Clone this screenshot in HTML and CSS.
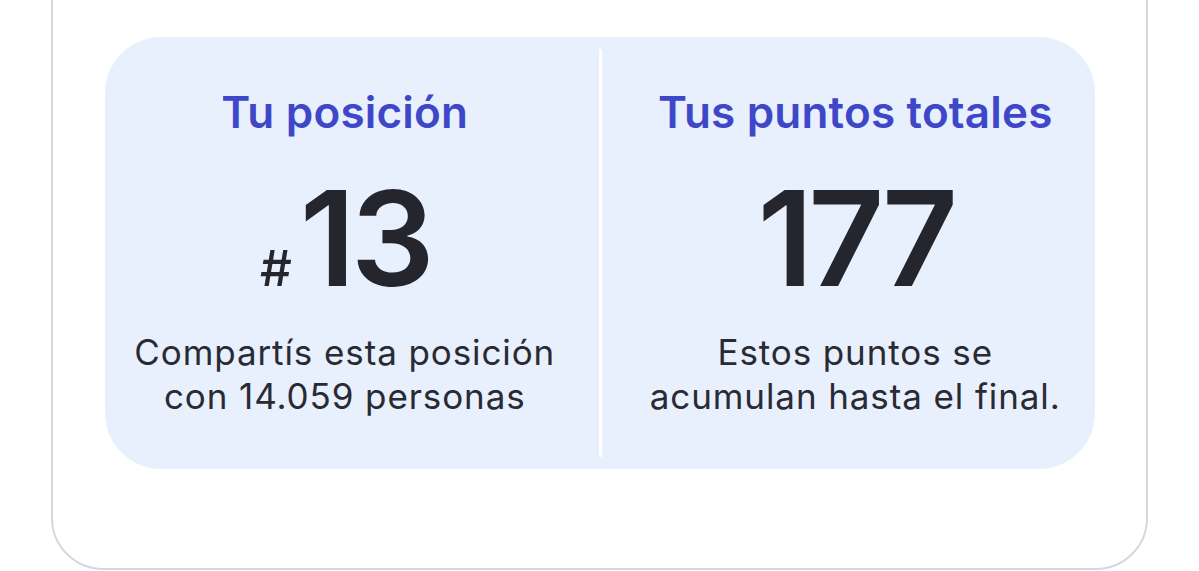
FILE: index.html
```html
<!DOCTYPE html>
<html lang="es">
<head>
<meta charset="UTF-8" />
<meta name="viewport" content="width=device-width, initial-scale=1" />
<title>Tu posición</title>
<link rel="stylesheet" href="styles.css">
</head>
<body>
  <div class="card">
    <div class="stats">
      <div class="stat stat-left">
        <h2 class="stat-title">Tu posición</h2>
        <div class="stat-value"><span class="hash">#</span>13</div>
        <p class="stat-note">Compartís esta posición<br>con 14.059 personas</p>
      </div>
      <div class="divider"></div>
      <div class="stat stat-right">
        <h2 class="stat-title">Tus puntos totales</h2>
        <div class="stat-value">177</div>
        <p class="stat-note">Estos puntos se<br>acumulan hasta el final.</p>
      </div>
    </div>
  </div>
</body>
</html>
```

FILE: styles.css
```css
body {
  margin: 0;
  background: #fff;
  font-family: Inter, "Noto Sans", sans-serif;
  height: 571px;
  overflow: hidden;
}

.card {
  margin: -60px 0 0 51px;
  width: 1097px;
  border: 2px solid #d6d6e2;
  border-radius: 0 0 52px 52px;
  padding: 95px 51px 99px 52px;
  box-sizing: border-box;
}

.stats {
  background-color: #e8f0fd;
  border-radius: 56px;
  height: 432px;
  display: grid;
  grid-template-columns: 1fr 3px 1fr;
  align-items: stretch;
}

.divider {
  background: #fff;
  margin: 12px 0;
}

.stat {
  display: flex;
  flex-direction: column;
  align-items: center;
  text-align: center;
  padding-top: 49px;
}

.stat-left { padding-right: 14px; }
.stat-right { padding-left: 14px; }

.stat-title {
  margin: 0;
  font-size: 44px;
  font-weight: 600;
  color: #3f47c9;
  line-height: 52px;
  letter-spacing: 0.2px;
}

.stat-value {
  margin-top: 40px;
  height: 120px;
  font-size: 132px;
  font-weight: 600;
  color: #25252e;
  line-height: 120px;
  letter-spacing: -5px;
}

.hash {
  display: inline-block;
  font-size: 50px;
  line-height: 1;
  font-weight: 500;
  margin-right: 8px;
  letter-spacing: 0;
}

.stat-note {
  margin: 32px 0 0;
  font-size: 35px;
  line-height: 44px;
  letter-spacing: 0.9px;
  color: #2a2a33;
}
```
